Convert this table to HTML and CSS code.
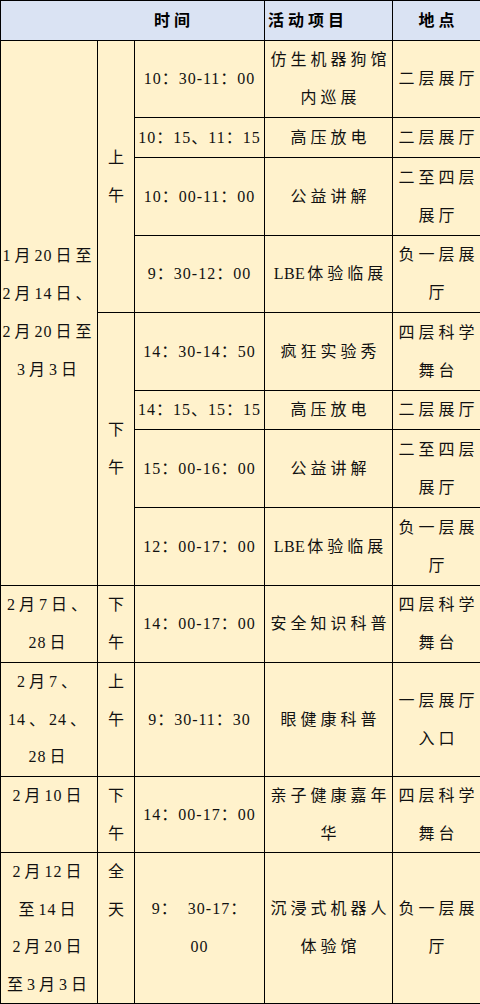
FILE: index.html
```html
<!DOCTYPE html>
<html lang="zh-CN">
<head>
<meta charset="utf-8">
<title>活动安排</title>
<link rel="stylesheet" href="styles.css">
</head>
<body>
<table class="sched">
  <colgroup>
    <col class="c1"><col class="c2"><col class="c3"><col class="c4"><col class="c5">
  </colgroup>
  <tr class="hd">
    <th colspan="3" class="h-time">时间</th>
    <th class="h-act">活动项目</th>
    <th>地点</th>
  </tr>
  <tr class="r77">
    <td rowspan="8" class="date"><span class="n">1</span>月<span class="n">20</span>日至<br><span class="n">2</span>月<span class="n">14</span>日、<br><span class="n">2</span>月<span class="n">20</span>日至<br><span class="n">3</span>月<span class="n">3</span>日</td>
    <td rowspan="4" class="ap">上<br>午</td>
    <td class="t">10：30-11：00</td>
    <td>仿生机器狗馆<br>内巡展</td>
    <td>二层展厅</td>
  </tr>
  <tr class="r40">
    <td class="t">10：15、11：15</td>
    <td>高压放电</td>
    <td>二层展厅</td>
  </tr>
  <tr class="r78">
    <td class="t">10：00-11：00</td>
    <td>公益讲解</td>
    <td>二至四层<br>展厅</td>
  </tr>
  <tr class="r77">
    <td class="t">9：30-12：00</td>
    <td><span class="l">LBE</span>体验临展</td>
    <td>负一层展<br>厅</td>
  </tr>
  <tr class="r78">
    <td rowspan="4" class="ap">下<br>午</td>
    <td class="t">14：30-14：50</td>
    <td>疯狂实验秀</td>
    <td>四层科学<br>舞台</td>
  </tr>
  <tr class="r39">
    <td class="t">14：15、15：15</td>
    <td>高压放电</td>
    <td>二层展厅</td>
  </tr>
  <tr class="r78">
    <td class="t">15：00-16：00</td>
    <td>公益讲解</td>
    <td>二至四层<br>展厅</td>
  </tr>
  <tr class="r78">
    <td class="t">12：00-17：00</td>
    <td><span class="l">LBE</span>体验临展</td>
    <td>负一层展<br>厅</td>
  </tr>
  <tr class="r77">
    <td class="date"><span class="n">2</span>月<span class="n">7</span>日、<br><span class="n">28</span>日</td>
    <td class="ap">下<br>午</td>
    <td class="t">14：00-17：00</td>
    <td>安全知识科普</td>
    <td>四层科学<br>舞台</td>
  </tr>
  <tr class="r114">
    <td class="date"><span class="n">2</span>月<span class="n">7</span>、<br><span class="n">14</span>、<span class="n">24</span>、<br><span class="n">28</span>日</td>
    <td class="ap top">上<br>午</td>
    <td class="t">9：30-11：30</td>
    <td>眼健康科普</td>
    <td>一层展厅<br>入口</td>
  </tr>
  <tr class="r76">
    <td class="date top"><span class="n">2</span>月<span class="n">10</span>日</td>
    <td class="ap">下<br>午</td>
    <td class="t">14：00-17：00</td>
    <td>亲子健康嘉年<br>华</td>
    <td>四层科学<br>舞台</td>
  </tr>
  <tr class="r151">
    <td class="date tight"><span class="n">2</span>月<span class="n">12</span>日<br>至<span class="n">14</span>日<br><span class="n">2</span>月<span class="n">20</span>日<br>至<span class="n">3</span>月<span class="n">3</span>日</td>
    <td class="ap top">全<br>天</td>
    <td class="t">9：&nbsp; 30-17：<br>00</td>
    <td>沉浸式机器人<br>体验馆</td>
    <td>负一层展<br>厅</td>
  </tr>
</table>
</body>
</html>
```

FILE: styles.css
```css
html, body {
  margin: 0;
  padding: 0;
  background: #ffffff;
}

.sched {
  width: 480px;
  border-collapse: collapse;
  table-layout: fixed;
  font-family: "Liberation Serif", "Noto Sans CJK SC", serif;
  font-size: 16px;
  line-height: 38px;
  color: #111111;
  background: #fff2cc;
}

.c1 { width: 97px; }
.c2 { width: 37px; }
.c3 { width: 130px; }
.c4 { width: 128px; }
.c5 { width: 88px; }

.sched th,
.sched td {
  border: 1px solid #000000;
  padding: 0 0 0 4px;
  text-align: center;
  vertical-align: middle;
  white-space: nowrap;
  letter-spacing: 4px;
  overflow: hidden;
}

.hd th {
  background: #dae3f3;
  font-weight: 700;
  height: 39px;
  color: #000000;
}

.sched th.h-time {
  text-align: left;
  padding-left: 153px;
}

.sched th.h-act {
  text-align: left;
  padding-left: 3px;
}

.r39 { height: 39px; }
.r40 { height: 40px; }
.r76 { height: 76px; }
.r77 { height: 77px; }
.r78 { height: 78px; }
.r114 { height: 114px; }
.r151 { height: 151px; }

.r76 td,
.r114 td {
  line-height: 37.5px;
}

.sched td.date {
  padding: 0;
}

.sched td.tight {
  line-height: 37.5px;
}

.sched td.ap {
  padding: 0 0 0 4px;
}

.sched td.top {
  vertical-align: top;
}

.sched td.t {
  letter-spacing: 1px;
  padding: 0;
}

.n {
  letter-spacing: 1px;
  margin-right: 3px;
}

.l {
  letter-spacing: 0.5px;
  margin-right: 2px;
}
```
